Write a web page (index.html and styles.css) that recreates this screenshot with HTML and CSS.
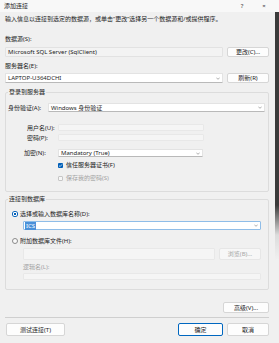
FILE: index.html
```html
<!DOCTYPE html>
<html lang="zh-CN">
<head>
    <meta charset="UTF-8">
    <title>添加连接</title>
    <link rel="stylesheet" href="styles.css">
</head>
<body>

<div class="window">
    <div class="titlebar">
        <span class="title">添加连接</span>
        <span class="tb-btns"><span>?</span><span>×</span></span>
    </div>

    <div class="content">
        <p class="intro">输入信息以连接到选定的数据源，或单击“更改”选择另一个数据源和/或提供程序。</p>

        <div class="lbl lbl-source">数据源(S):</div>
        <div class="row row-source">
            <div class="field readonly">Microsoft SQL Server (SqlClient)</div>
            <button class="btn btn-side">更改(C)...</button>
        </div>

        <div class="lbl lbl-server">服务器名(E):</div>
        <div class="row row-server">
            <div class="field combo">LAPTOP-U364DCHI<svg class="chev" width="4" height="3" viewBox="0 0 4 3"><path d="M0.3 0.6 L2 2.3 L3.7 0.6" fill="none" stroke="#777" stroke-width="0.6"/></svg></div>
            <button class="btn btn-side">刷新(R)</button>
        </div>

        <fieldset class="group group-login">
            <legend>登录到服务器</legend>
            <div class="frow frow-auth">
                <span class="flabel">身份验证(A):</span>
                <div class="field combo">Windows 身份验证<svg class="chev" width="4" height="3" viewBox="0 0 4 3"><path d="M0.3 0.6 L2 2.3 L3.7 0.6" fill="none" stroke="#777" stroke-width="0.6"/></svg></div>
            </div>
            <div class="frow frow-user">
                <span class="flabel">用户名(U):</span>
                <div class="field off"></div>
            </div>
            <div class="frow frow-pass">
                <span class="flabel">密码(P):</span>
                <div class="field off"></div>
            </div>
            <div class="frow frow-enc">
                <span class="flabel">加密(N):</span>
                <div class="field combo">Mandatory (True)<svg class="chev" width="4" height="3" viewBox="0 0 4 3"><path d="M0.3 0.6 L2 2.3 L3.7 0.6" fill="none" stroke="#777" stroke-width="0.6"/></svg></div>
            </div>
            <div class="frow frow-check">
                <span class="check on"><svg width="5" height="5" viewBox="0 0 5 5"><path d="M1 2.6 L2.1 3.6 L4 1.4" fill="none" stroke="#fff" stroke-width="0.7"/></svg></span>
                <span>信任服务器证书(F)</span>
            </div>
            <div class="frow frow-save">
                <span class="check"></span>
                <span class="muted">保存我的密码(S)</span>
            </div>
        </fieldset>

        <fieldset class="group group-db">
            <legend>连接到数据库</legend>
            <div class="frow frow-radio1">
                <span class="radio on"></span>
                <span>选择或输入数据库名称(D):</span>
            </div>
            <div class="field combo focus db-name"><span class="sel">ICS</span><svg class="chev" width="4" height="3" viewBox="0 0 4 3"><path d="M0.3 0.6 L2 2.3 L3.7 0.6" fill="none" stroke="#777" stroke-width="0.6"/></svg></div>
            <div class="frow frow-radio2">
                <span class="radio"></span>
                <span>附加数据库文件(H):</span>
            </div>
            <div class="file-row">
                <div class="field off"></div>
                <button class="btn btn-browse" disabled>浏览(B)...</button>
            </div>
            <div class="lbl muted lbl-logical">逻辑名(L):</div>
            <div class="field off logical"></div>
        </fieldset>

        <div class="adv-row">
            <button class="btn btn-adv">高级(V)...</button>
        </div>

        <div class="sep"></div>

        <div class="footer">
            <button class="btn btn-test">测试连接(T)</button>
            <span class="spacer"></span>
            <button class="btn btn-ok">确定</button>
            <button class="btn btn-cancel">取消</button>
        </div>
    </div>
</div>
<div class="edge"></div>

</body>
</html>
```

FILE: styles.css
```css
body {
    margin: 0;
    width: 279px;
    height: 343px;
    overflow: hidden;
    display: flex;
    background: #f0f0f0;
    font-family: "Noto Sans", "Noto Sans CJK SC", sans-serif;
    font-size: 6px;
    color: #1b1b1b;
}

.window {
    width: 275px;
    display: flex;
    flex-direction: column;
}

.edge {
    width: 4px;
    background: linear-gradient(to bottom, #f8f8f8 0, #f8f8f8 12px, #3a3a3a 12px, #3a3a3a 205px, #dcdcdc 235px, #f0f0f0 260px);
}

.titlebar {
    height: 12px;
    background: #f8f8f8;
    display: flex;
    align-items: center;
    justify-content: space-between;
    padding-left: 4px;
    line-height: 8px;
}
.tb-btns {
    display: flex;
}
.tb-btns span {
    width: 22px;
    text-align: center;
    color: #333;
}

.content {
    padding: 0 6px 0 5px;
    display: flex;
    flex-direction: column;
}

.intro {
    margin: 3px 0 0;
    line-height: 8px;
    white-space: nowrap;
}

.lbl {
    line-height: 8px;
}
.lbl-source { margin-top: 12px; }
.lbl-server { margin-top: 5px; }

.row {
    display: flex;
    gap: 4px;
    height: 10px;
}
.row-source { margin-top: 4px; }
.row-server { margin-top: 3px; }

.field {
    position: relative;
    flex: 1;
    box-sizing: border-box;
    background: #fff;
    border: 1px solid #e3e3e3;
    border-bottom-color: #b9b9b9;
    border-radius: 1px;
    padding-left: 2px;
    display: flex;
    align-items: center;
    line-height: 8px;
    white-space: nowrap;
}
.field.readonly {
    background: #f3f3f3;
    border-color: #e2e2e2;
}
.field.off {
    background: #f5f5f5;
    border-color: #e8e8e8;
}
.combo .chev {
    margin-left: auto;
    margin-right: 2px;
}
.field.focus {
    border-color: #8fbde8;
}
.sel {
    background: #4a90d9;
    color: #fff;
    padding: 0 1px;
}

.btn {
    box-sizing: border-box;
    background: #fdfdfd;
    border: 1px solid #d6d6d6;
    border-radius: 2px;
    font: inherit;
    color: #1b1b1b;
    padding: 0;
    line-height: 8px;
}
.btn:disabled {
    color: #a6a6a6;
    background: #f7f7f7;
    border-color: #e6e6e6;
}
.btn-side { width: 42px; }

.group {
    margin: 0;
    padding: 0 1px 9px 2px;
    border: 1px solid #dcdcdc;
    border-radius: 2px;
    min-width: 0;
}
.group legend {
    padding: 0 1px;
    line-height: 8px;
}
.group-login { margin-top: 5px; }
.group-db { margin-top: 3px; }

.frow {
    display: flex;
    align-items: center;
    line-height: 8px;
}
.flabel {
    flex: none;
}
.frow-auth {
    margin-top: 7px;
    height: 9px;
    margin-right: 2px;
}
.frow-auth .flabel { width: 40px; }
.frow-auth .field { height: 9px; }

.frow-user, .frow-pass {
    height: 7px;
    padding-left: 19px;
}
.frow-user { margin-top: 12px; }
.frow-pass { margin-top: 3px; }
.frow-user .flabel, .frow-pass .flabel { width: 31px; }
.frow-user .field, .frow-pass .field {
    flex: none;
    width: 146px;
    height: 7px;
}

.frow-enc {
    margin-top: 8px;
    height: 8px;
    padding-left: 16px;
}
.frow-enc .flabel { width: 34px; }
.frow-enc .field {
    flex: none;
    width: 145px;
    height: 8px;
}

.frow-check, .frow-save {
    height: 8px;
    padding-left: 50px;
    gap: 3px;
}
.frow-check { margin-top: 4px; }
.frow-save { margin-top: 5px; }

.check {
    width: 5px;
    height: 5px;
    box-sizing: border-box;
    border: 1px solid #c6c6c6;
    background: #f7f7f7;
    border-radius: 1px;
    display: flex;
}
.check.on {
    border: none;
    background: #005fb8;
}

.muted { color: #a3a3a3; }

.frow-radio1, .frow-radio2 {
    height: 8px;
    padding-left: 4px;
    gap: 2px;
}
.frow-radio1 { margin-top: 7px; }
.frow-radio2 { margin-top: 7px; }

.radio {
    width: 6px;
    height: 6px;
    box-sizing: border-box;
    border-radius: 50%;
    border: 1px solid #8a8a8a;
    background: #fafafa;
}
.radio.on {
    border: none;
    background: radial-gradient(circle, #005fb8 0, #005fb8 1.2px, #fff 1.4px, #fff 2px, #005fb8 2.3px);
}

.db-name {
    flex: none;
    height: 9px;
    margin: 3px 6px 0 15px;
    padding-left: 1px;
}

.file-row {
    display: flex;
    gap: 4px;
    height: 12px;
    margin: 3px 6px 0 15px;
}
.btn-browse { width: 42px; }

.lbl-logical {
    margin: 3px 0 0 15px;
}
.logical {
    flex: none;
    height: 7px;
    margin: 2px 6px 0 15px;
}

.adv-row {
    display: flex;
    justify-content: flex-end;
    margin-top: 12px;
}
.btn-adv {
    width: 46px;
    height: 11px;
}

.sep {
    margin-top: 4px;
    height: 1px;
    background: #cfcfcf;
}

.footer {
    display: flex;
    gap: 4px;
    margin-top: 5px;
    height: 13px;
}
.footer .btn { height: 13px; }
.spacer { flex: 1; }
.btn-test {
    width: 59px;
    margin-left: 1px;
}
.btn-ok {
    width: 45px;
    border-color: #0067c0;
}
.btn-cancel { width: 42px; }
```
